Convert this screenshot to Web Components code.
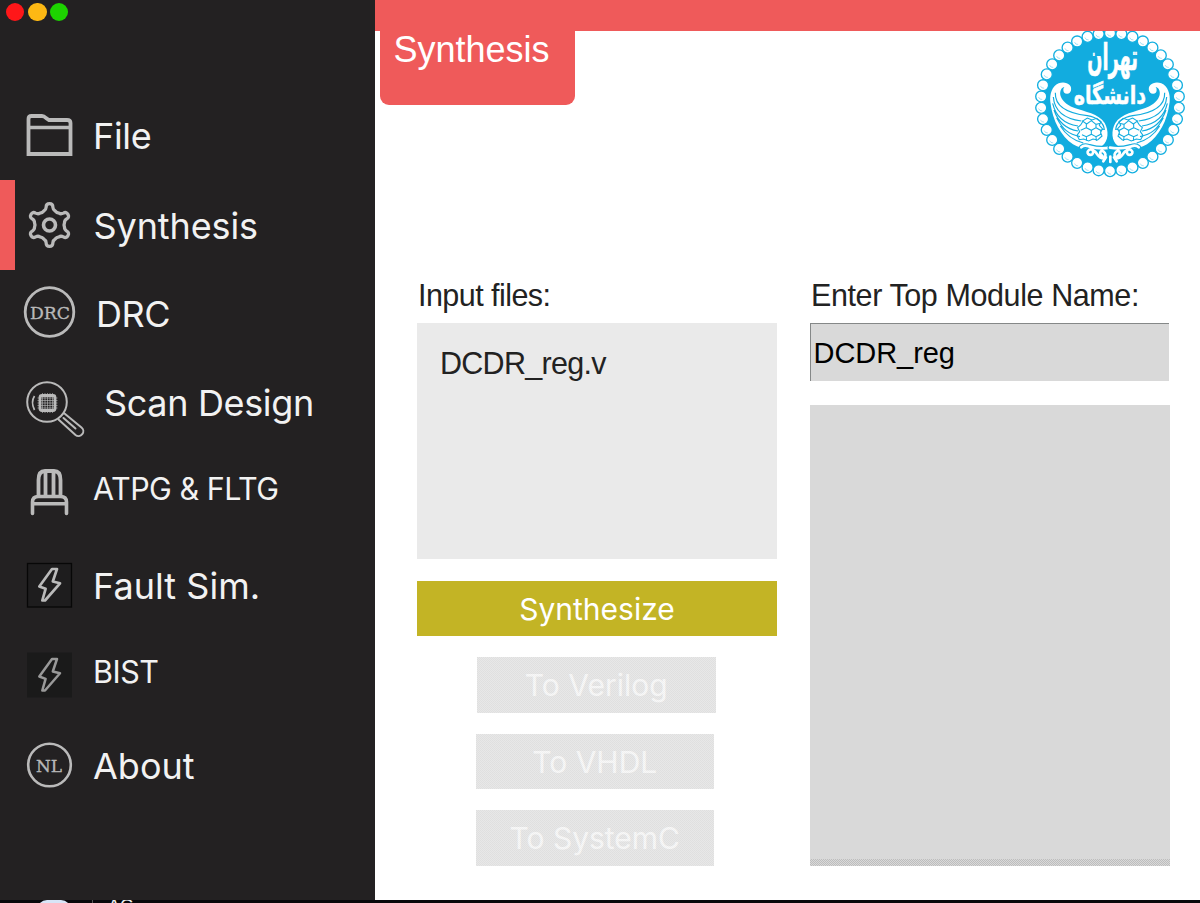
<!DOCTYPE html>
<html lang="en">
<head>
<meta charset="utf-8">
<title>Synthesis</title>
<style>
html,body{margin:0;height:903px;overflow:hidden;background:#fff}
</style>
</head>
<body>
<app-window></app-window>
<script>
const define = (name, html, setup) => customElements.define(name, class extends HTMLElement {
  connectedCallback() {
    if (this.shadowRoot) return;
    const t = document.createElement('template');
    t.innerHTML = typeof html === 'function' ? html(this) : html;
    this.attachShadow({mode: 'open'}).append(t.content.cloneNode(true));
    if (setup) setup(this, this.shadowRoot);
  }
});

/* Each icon is drawn in a 90x90 row cell */
const bolt = 'M52 25H57L52.800 37.500L60 39.300L45 56.500H42.300L45.600 44.800L39.300 42.500Z';
const icons = {
  file: '<path d="M28.5 64V29Q28.5 26 31.500 26H42Q44 26 46 28L49 30H67Q70.500 30 70.500 33V64Z" stroke-width="3.800"/><path d="M29 37.500H70" stroke-width="3.400"/>',
  gear: '<circle cx="49.500" cy="45" r="6" stroke-width="3.600"/><path id="g" stroke-width="3.300" stroke-linejoin="round"/>',
  drc: '<circle cx="49.500" cy="42" r="24.300" stroke-width="2.800"/><text x="30" y="49" font-size="17.500" textLength="40" lengthAdjust="spacingAndGlyphs">DRC</text>',
  scan: '<circle cx="47" cy="42" r="19.800" stroke-width="2"/><path d="M34.500 36Q30.500 42 34.500 50" stroke-width="1.700"/><rect x="40" y="35.500" width="15" height="15" rx="2" stroke-width="2.800"/><path d="M42.500 33V53M45 33V53M47.500 33V53M50 33V53M52.500 33V53M37.500 38H57.500M37.500 40.500H57.500M37.500 43H57.500M37.500 45.500H57.500M37.500 48H57.500" stroke-width=".8" opacity=".8"/><path d="M64.500 53.500L81.500 67.500A4.800 4.800 0 0 1 75.500 75L58.500 59.500M63.500 58L75.500 68.500" stroke-width="2" stroke-linecap="round"/>',
  chair: '<path d="M38.500 47V30Q38.500 21 45 21H54Q60.500 21 60.500 30V47M45.500 21V46M53.500 21V46" stroke-width="3.800"/><path d="M32.500 63.500V52Q32.500 46.500 38.500 46.500H60.500Q66.500 46.500 66.500 52V63.500M33 53.700H66" stroke-width="3.600" stroke-linecap="round"/>',
  fault: '<rect x="27.500" y="23.500" width="44" height="43.500" fill="#1e1d1e" stroke="#070707" stroke-width="1.300"/><path d="BOLT" transform="translate(0 4)" stroke-width="2.700" stroke-linejoin="round"/>',
  bist: '<rect x="27" y="22.500" width="45" height="45" fill="#1a1a1a" stroke="none"/><path d="BOLT" transform="translate(0 4)" stroke="#999" stroke-width="2.500" stroke-linejoin="round"/>',
  about: '<circle cx="49.500" cy="45" r="21.300" stroke-width="2.600"/><text x="36" y="51.500" font-size="17.500" textLength="26" lengthAdjust="spacingAndGlyphs">NL</text>'
};

const gearPath = () => {
  const at = (r, a) => { const t = a * Math.PI / 180; return (49.5 + r * Math.sin(t)).toFixed(2) + ' ' + (45 - r * Math.cos(t)).toFixed(2); };
  let d = '';
  for (let i = 0; i < 6; i++) {
    const a = i * 60;
    d += (i ? 'L' : 'M') + at(15.2, a - 21) + 'Q' + at(15.6, a - 13) + ' ' + at(18.3, a - 10.5) + 'Q' + at(21.6, a - 9) + ' ' + at(21.3, a) + 'Q' + at(21.6, a + 9) + ' ' + at(18.3, a + 10.5) + 'Q' + at(15.6, a + 13) + ' ' + at(15.2, a + 21) + 'Q' + at(14, a + 30) + ' ' + at(15.2, a + 39);
  }
  return d + 'Z';
};

define('nav-icon', el => `<style>
:host{display:block;flex:none;width:90px;height:90px}
svg{display:block;fill:none;stroke:#bababa}
text{fill:#b8b8b8;stroke:#b8b8b8;stroke-width:.35px;font-family:"DejaVu Serif",serif}
</style><svg width="90" height="90">${icons[el.getAttribute('name')].replace('BOLT', bolt)}</svg>`, (el, root) => {
  const g = root.querySelector('#g');
  if (g) g.setAttribute('d', gearPath());
});

define('nav-item', el => `<style>
:host{display:flex;height:90px;box-sizing:border-box;color:#f2f2f2;font:400 36px/90px Inter,sans-serif;white-space:nowrap}
:host([selected]){background:linear-gradient(#ef5a5a,#ef5a5a) 0 0/15px 90px no-repeat}
span{display:block}
</style><nav-icon name="${el.getAttribute('icon')}"></nav-icon><span><slot></slot></span>`, (el, root) => {
  const s = root.querySelector('span').style, a = n => el.getAttribute(n);
  s.marginLeft = a('indent') + 'px';
  s.lineHeight = a('line') + 'px';
  s.letterSpacing = (a('track') || 0) + 'px';
  if (a('size')) s.fontSize = a('size') + 'px';
});

define('window-dots', `<style>
:host{display:flex;height:90px;padding:3px 0 0 6px;box-sizing:border-box}
i{width:18.400px;height:18.400px;border-radius:50%}
i:nth-of-type(1){background:#ff1719;margin-right:3.800px}
i:nth-of-type(2){background:#fdb813;margin-right:3px}
i:nth-of-type(3){background:#1dd300}
</style><i></i><i></i><i></i>`);

define('side-bar', `<style>
:host{display:block;width:375px;height:900px;background:#232122}
</style>
<window-dots></window-dots>
<nav-item icon="file" indent="3" line="92" track="-.3">File</nav-item>
<nav-item icon="gear" indent="3.500" line="92" track="-.1" selected>Synthesis</nav-item>
<nav-item icon="drc" indent="6" line="88" track="-.5">DRC</nav-item>
<nav-item icon="scan" indent="14" line="86" track="-.35">Scan Design</nav-item>
<nav-item icon="chair" indent="3" line="77" size="30.500" track="-.5">ATPG &amp; FLTG</nav-item>
<nav-item icon="fault" indent="3" line="92" track=".05">Fault Sim.</nav-item>
<nav-item icon="bist" indent="3" line="84" size="30.500" track="-.5">BIST</nav-item>
<nav-item icon="about" indent="3" line="92" track="0">About</nav-item>`);

define('university-seal', `<style>
:host{display:block;width:180px;height:165px}
svg{display:block}
text{fill:#fff;stroke:#fff;stroke-width:1.500px;font-family:"DejaVu Sans",sans-serif;font-weight:700}
</style>
<svg width="180" height="165" viewBox="0 0 540 495">
<circle cx="270" cy="246.500" r="205" fill="#12acdf"/>
<g id="pearls" fill="#fff" stroke="#12afe0" stroke-width="4"></g>
<text transform="translate(202 150) scale(1 1.350)" font-size="82" textLength="152" lengthAdjust="spacingAndGlyphs" direction="rtl" text-anchor="end">تهران</text>
<text x="161" y="252" font-size="76" textLength="217" lengthAdjust="spacingAndGlyphs" direction="rtl" text-anchor="end">دانشگاه</text>
<g id="wing">
<path d="M152 214C160 194 136 182 116 190C96 199 89 222 91 246C98 304 123 348 159 373C190 391 228 387 247 377C266 364 267 331 254 309C236 281 194 275 164 264C133 253 112 228 124 207C130 198 141 200 140 216Z" fill="#fff"/>
<circle cx="141" cy="210" r="11" fill="#fff"/>
<g fill="none" stroke="#12acdf" stroke-width="3.500">
<path d="M106 218C104 266 154 281 202 287C232 292 252 308 253 330M100 231C104 282 146 298 184 303M98 250C109 297 141 313 174 318M102 270C116 310 143 328 174 333M110 293C128 328 146 343 180 350M121 318C138 345 158 361 190 369"/>
<path d="M190 302l12-8 14 6 14-5 13 10-5 11 9 10-5 12 4 10-13 12-14-3-13 6-15-6-13 2-7-13 8-11-6-12 9-8zM186 302l14 10 14-10 14 11 14-3M199 312v11l-17 8M199 323l15 8 14-8v-10M228 323l14 8 10-4M214 331v12l-15 7-13-6M214 343l14 7 14-7v-12M199 350l1 13M228 350l1 13" stroke-width="3.200"/>
</g>
<path d="M184 382C196 371 218 381 219 394C222 409 200 407 203 395C211 380 226 393 235 407C249 425 266 406 250 394C240 388 237 404 247 407M211 380Q239 388 270 383M258 412L250 424M269 410V426" fill="none" stroke="#12acdf" stroke-width="15" stroke-linecap="round"/>
<path d="M184 382C196 371 218 381 219 394C222 409 200 407 203 395C211 380 226 393 235 407C249 425 266 406 250 394C240 388 237 404 247 407M211 380Q239 388 270 383M258 412L250 424M269 410V426" fill="none" stroke="#fff" stroke-width="8" stroke-linecap="round"/>
</g>
<use href="#wing" transform="translate(540 0) scale(-1 1)"/>
</svg>`, (el, root) => {
  let s = '';
  for (let i = 0; i < 38; i++) {
    const t = i * Math.PI / 19, x = 270 + 207 * Math.sin(t), y = 246.5 - 207 * Math.cos(t);
    s += `<circle cx="${x.toFixed(1)}" cy="${y.toFixed(1)}" r="16.500"/><path d="M${(x - 8).toFixed(1)} ${(y + 2).toFixed(1)}q3 8 11 7" fill="none" stroke-width="2.500" opacity=".45"/>`;
  }
  root.querySelector('#pearls').innerHTML = s;
});

define('page-header', `<style>
:host{display:grid;grid-template-columns:4.500px 195px 1fr 180px;height:185px;background:linear-gradient(#ef5a5a,#ef5a5a) 0 0/100% 31px no-repeat}
h1{grid-column:2;margin:31px 0 0;height:74px;box-sizing:border-box;padding-left:14px;border-radius:0 0 9px 9px;background:#ef5a5a;color:#fff;font:400 36px/37px "Liberation Sans",sans-serif;white-space:nowrap}
.seal{grid-column:4;height:154px;margin-top:31px;overflow:hidden}
university-seal{margin-top:-11px}
</style><h1><slot></slot></h1><div class="seal"><university-seal></university-seal></div>`);

define('action-button', `<style>
:host{display:block;height:55.500px;background:#c3b425;color:#fff;font:400 30px/56px Inter,sans-serif;text-align:center;letter-spacing:0;position:relative}
:host([disabled]){width:238.500px;background:#dadada;color:#f4f4f4}
:host([disabled])::after{content:"";position:absolute;inset:0;background:repeating-conic-gradient(#fff9 0 25%,#ebebeb80 0 50%) 0 0/2px 2px;opacity:.65}
</style><slot></slot>`);

define('field-label', `<style>
:host{display:block;height:52.500px;padding-left:1px;font:400 30.500px/51px "Liberation Sans",sans-serif;color:#222;white-space:nowrap}
</style><slot></slot>`);

define('synthesis-form', `<style>
:host{display:grid;grid-template-columns:360px 360px;column-gap:33px;padding:85px 0 0 42px}
.col{display:flex;flex-direction:column}
.files{height:236.500px;box-sizing:border-box;padding:20px 0 0 23px;background:#eaeaea;color:#222;font:400 30.500px/40px "Liberation Sans",sans-serif;letter-spacing:-.72px;margin-bottom:21.500px}
action-button{margin-bottom:21px}
.v{margin-left:60px}.w{margin-left:58.500px}
.field{width:359px;height:58.500px;box-sizing:border-box;border:0;border-top:1.500px solid #858888;border-left:1.500px solid #858888;padding-left:2.500px;background:#d9d9d9;color:#000;font:400 29px/59px "Liberation Sans",sans-serif;letter-spacing:-.05px;margin-bottom:24px}
.out{height:460.500px;background:#d9d9d9;display:flex;align-items:flex-end}
.out i{height:7px;width:100%;background:repeating-conic-gradient(#bdbdbd 0 25%,#d9d9d9 0 50%) 0 0/2px 2px}
</style>
<div class="col"><field-label style="letter-spacing:-.55px">Input files:</field-label><div class="files">DCDR_reg.v</div>
<action-button>Synthesize</action-button><action-button class="v" disabled>To Verilog</action-button><action-button class="w" disabled>To VHDL</action-button><action-button class="w" disabled>To SystemC</action-button></div>
<div class="col"><field-label style="letter-spacing:-.4px">Enter Top Module Name:</field-label><div class="field">DCDR_reg</div><div class="out"><i></i></div></div>`);

define('task-strip', `<style>
:host{display:flex;height:3px;overflow:hidden;background:#08070a;padding-left:37px;align-items:flex-start}
.pill{width:34px;height:20px;border-radius:12px;background:#d8e5f7}
.line{width:1px;height:3px;background:#555;margin:0 15px 0 21px}
span{color:#eee;font:400 18px/20px "Liberation Sans",sans-serif;margin-top:-4px}
</style><div class="pill"></div><div class="line"></div><span>AG</span>`);

define('app-window', `<style>
:host{display:block;width:1200px;height:903px;overflow:hidden;background:#fff}
.body{display:grid;grid-template-columns:375px 825px;height:900px}
</style>
<div class="body"><side-bar></side-bar><main><page-header>Synthesis</page-header><synthesis-form></synthesis-form></main></div><task-strip></task-strip>`);
</script>
</body>
</html>
